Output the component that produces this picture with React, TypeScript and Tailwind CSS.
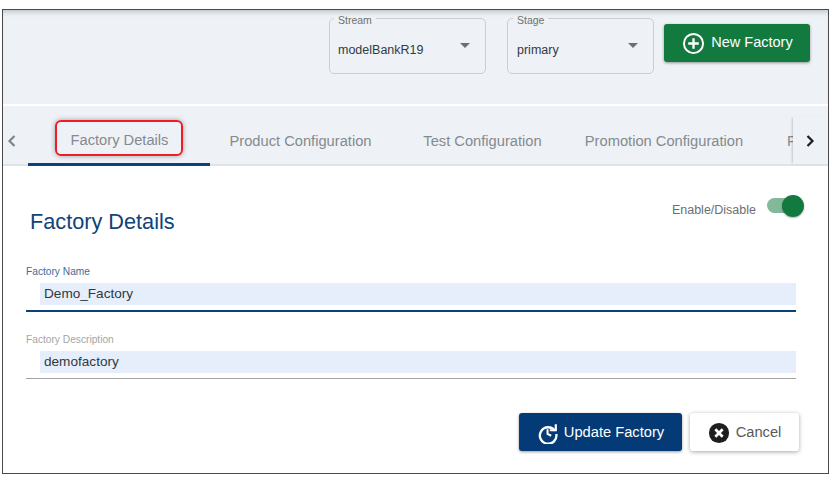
import React from "react";

const SelectBox = ({ label, value, box }: { label: string; value: string; box: string }) => (
  <fieldset className={`${box} h-[63px] rounded-[5px] border border-[#c9ced3] pr-[15px]`}>
    <legend className="px-[4px] pt-[4px] text-[10.5px] leading-[10px] text-[#6f6f6f]">{label}</legend>
    <div className="flex items-start justify-between pl-[4px]">
      <span className="mt-[16px] text-[12.5px] leading-[18px] text-[#333a40]">{value}</span>
      <span className="mt-[18px] h-0 w-0 border-x-[5px] border-t-[5px] border-x-transparent border-t-[#6e6e6e]" />
    </div>
  </fieldset>
);

const Tab = ({ label, width }: { label: string; width: string }) => (
  <div className={`${width} flex shrink-0 items-center justify-center pt-[11px] text-[14.7px] text-[#858a8e]`}>{label}</div>
);

const Field = ({
  label,
  value,
  labelColor,
  lineClass,
  mb,
}: {
  label: string;
  value: string;
  labelColor: string;
  lineClass: string;
  mb: string;
}) => (
  <div className={`mr-[32px] ml-[23px] ${mb}`}>
    <div className={`text-[10.2px] leading-[16px] ${labelColor}`}>{label}</div>
    <div className="mt-[3px] ml-[14px] flex h-[22px] items-center bg-[#e6eefb] pl-[4px] text-[13.6px] text-[#33383d]">{value}</div>
    <div className={lineClass} />
  </div>
);

export default function App() {
  return (
    <div className="h-[478px] w-[834px] overflow-hidden bg-white pt-[9px] pl-[2px] font-['Liberation_Sans',Arial,sans-serif]">
      <div className="relative flex h-[465px] w-[827px] flex-col overflow-hidden border border-[#4a4a4a]">
        {/* top bar */}
        <div className="flex h-[94px] shrink-0 justify-end bg-[#eef2f6] pt-[1px] pr-[18px] shadow-[inset_0_6px_6px_-5px_rgba(0,0,0,0.25)]">
          <SelectBox label="Stream" value="modelBankR19" box="w-[157px] mr-[21px] pl-[4px]" />
          <SelectBox label="Stage" value="primary" box="w-[147px] mr-[10px] pl-[5px]" />
          <button className="mt-[13px] flex h-[38px] w-[146px] items-center justify-center rounded-[3px] bg-[#137a3f] pl-[1px] text-[14.5px] text-white shadow-[0_1px_3px_rgba(0,0,0,0.4)]">
            <svg width="23" height="23" viewBox="0 0 24 24" fill="none" stroke="white" strokeWidth="2" className="mr-[6px] mt-[1px]">
              <circle cx="12" cy="12" r="10" />
              <path d="M12 6.5v11M6.5 12h11" strokeWidth="2.4" />
            </svg>
            <span className="-mt-[1px]">New Factory</span>
          </button>
        </div>

        {/* tabs */}
        <div className="mt-[2px] flex h-[60px] shrink-0 items-stretch border-b-2 border-[#dfe3e6] bg-[#eef2f6]">
          <div className="flex w-[25px] shrink-0 items-center justify-start pt-[11px] pl-[4px]">
            <svg width="10" height="14" viewBox="0 0 10 14" fill="none" stroke="#808589" strokeWidth="2.2">
              <path d="M7.5 2 L2.5 7 L7.5 12" />
            </svg>
          </div>
          <div className="-mb-[2px] flex w-[765px] shrink-0 overflow-hidden">
            <div className="flex w-[182px] shrink-0 items-center justify-center border-b-[3px] border-[#0a437c] pt-[11px] pl-[1px] text-[14.7px] text-[#858a8e]">
              Factory Details
            </div>
            <Tab label="Product Configuration" width="w-[181px]" />
            <Tab label="Test Configuration" width="w-[183px]" />
            <Tab label="Promotion Configuration" width="w-[180px]" />
            <div className="flex flex-1 items-center pt-[11px] pl-[33px] text-[14.7px] text-[#858a8e]">F</div>
          </div>
          <div className="mt-[11px] flex flex-1 items-center justify-center bg-[#eef2f6] pr-[1px] shadow-[-2px_0_2px_-1px_rgba(0,0,0,0.18)]">
            <svg width="10" height="14" viewBox="0 0 10 14" fill="none" stroke="#1d1d1d" strokeWidth="2.2">
              <path d="M2.5 2 L7.5 7 L2.5 12" />
            </svg>
          </div>
        </div>

        {/* annotation round the first tab */}
        <div className="absolute top-[110px] left-[52px] h-[36px] w-[128px] rounded-[6px] border-2 border-[#ee1c25] shadow-[0_0_5px_rgba(0,0,0,0.35)]" />

        {/* form */}
        <div className="flex flex-1 flex-col">
          <div className="flex h-[98px] shrink-0 justify-between pr-[28px] pl-[27px]">
            <h1 className="mt-[42px] text-[21.7px] leading-[28px] text-[#0f4379]">Factory Details</h1>
            <div className="mt-[32px] flex items-start">
              <span className="mt-[4px] mr-[11px] text-[12.5px] leading-[16px] text-[#6b6f72]">Enable/Disable</span>
              <div className="relative h-[15px] w-[33px] rounded-full bg-[#82b99a]">
                <div className="absolute -top-[3px] -right-[4px] h-[22px] w-[22px] rounded-full bg-[#137a3f] shadow-[0_1px_2px_rgba(0,0,0,0.3)]" />
              </div>
            </div>
          </div>
          <Field
            label="Factory Name"
            value="Demo_Factory"
            labelColor="text-[#3f6c9b]"
            lineClass="mt-[5px] h-[2px] bg-[#0a437c]"
            mb="mb-[20px]"
          />
          <Field
            label="Factory Description"
            value="demofactory"
            labelColor="text-[#a5a5a5]"
            lineClass="mt-[5px] h-[1px] bg-[#a3a3a3]"
            mb="mb-[34px]"
          />
          <div className="flex justify-end gap-[8px] pr-[29px]">
            <button className="flex h-[38px] w-[163px] items-center justify-center rounded-[3px] bg-[#043a75] text-[14.7px] text-white shadow-[0_1px_3px_rgba(0,0,0,0.4)]">
              <svg width="22" height="22" viewBox="0 0 24 24" fill="none" stroke="white" strokeWidth="2.6" className="mr-[5px] mt-[2px]">
                <path d="M19.5 9.5A9 9 0 1 0 21 13" />
                <path d="M20.5 2.5v6.5h-6.5" strokeWidth="2.4" />
                <path d="M11.5 8v5l4 2" strokeWidth="2.2" />
              </svg>
              <span className="mt-[1px]">Update Factory</span>
            </button>
            <button className="flex h-[38px] w-[109px] items-center justify-center rounded-[3px] bg-white text-[14.7px] text-[#5a5a5a] shadow-[0_1px_4px_rgba(0,0,0,0.35)]">
              <svg width="22" height="22" viewBox="0 0 24 24" className="mr-[6px] mt-[1px]">
                <circle cx="12" cy="12" r="11" fill="#1f1f1f" />
                <path d="M8 8l8 8M16 8l-8 8" stroke="white" strokeWidth="3" />
              </svg>
              <span className="mt-[1px]">Cancel</span>
            </button>
          </div>
        </div>
      </div>
    </div>
  );
}
